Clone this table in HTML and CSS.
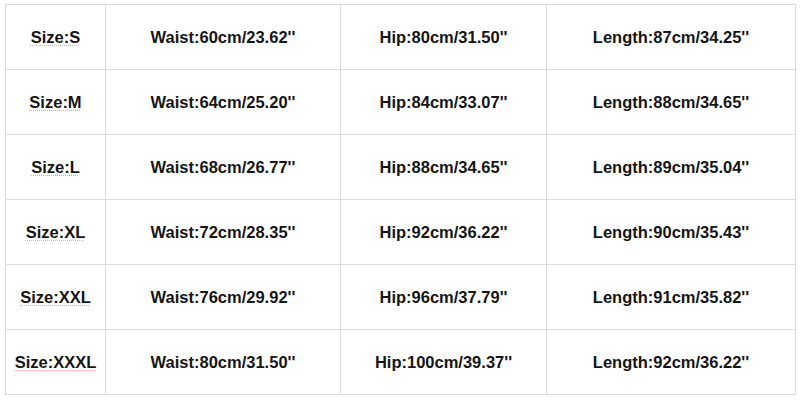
FILE: index.html
```html
<!DOCTYPE html>
<html>
<head>
<meta charset="utf-8">
<link rel="stylesheet" href="styles.css">
</head>
<body>
<table class="sizes">
  <colgroup>
    <col class="c1"><col class="c2"><col class="c3"><col class="c4">
  </colgroup>
  <tr><td><span class="size">Size:S</span></td><td>Waist:60cm/23.62''</td><td>Hip:80cm/31.50''</td><td>Length:87cm/34.25''</td></tr>
  <tr><td><span class="size">Size:M</span></td><td>Waist:64cm/25.20''</td><td>Hip:84cm/33.07''</td><td>Length:88cm/34.65''</td></tr>
  <tr><td><span class="size">Size:L</span></td><td>Waist:68cm/26.77''</td><td>Hip:88cm/34.65''</td><td>Length:89cm/35.04''</td></tr>
  <tr><td><span class="size">Size:XL</span></td><td>Waist:72cm/28.35''</td><td>Hip:92cm/36.22''</td><td>Length:90cm/35.43''</td></tr>
  <tr><td><span class="size">Size:XXL</span></td><td>Waist:76cm/29.92''</td><td>Hip:96cm/37.79''</td><td>Length:91cm/35.82''</td></tr>
  <tr><td><span class="size">Size:XXXL</span></td><td>Waist:80cm/31.50''</td><td>Hip:100cm/39.37''</td><td>Length:92cm/36.22''</td></tr>
</table>
</body>
</html>
```
FILE: styles.css
```css
html, body {
  margin: 0;
  background: #ffffff;
}
body {
  padding: 4px 5px 0 5px;
  font-family: "Liberation Sans", Arial, sans-serif;
}
.sizes {
  border-collapse: collapse;
  table-layout: fixed;
  width: 790px;
}
.c1 { width: 100px; }
.c2 { width: 235px; }
.c3 { width: 206px; }
.c4 { width: 249px; }
.sizes td {
  height: 64px;
  padding: 0;
  border: 1px solid #dadada;
  text-align: center;
  vertical-align: middle;
  font-size: 16.5px;
  font-weight: bold;
  color: #151515;
  white-space: nowrap;
}
.size {
  text-decoration: underline dotted #e3a3ae;
  text-decoration-thickness: 1px;
  text-underline-offset: 2px;
}
```
